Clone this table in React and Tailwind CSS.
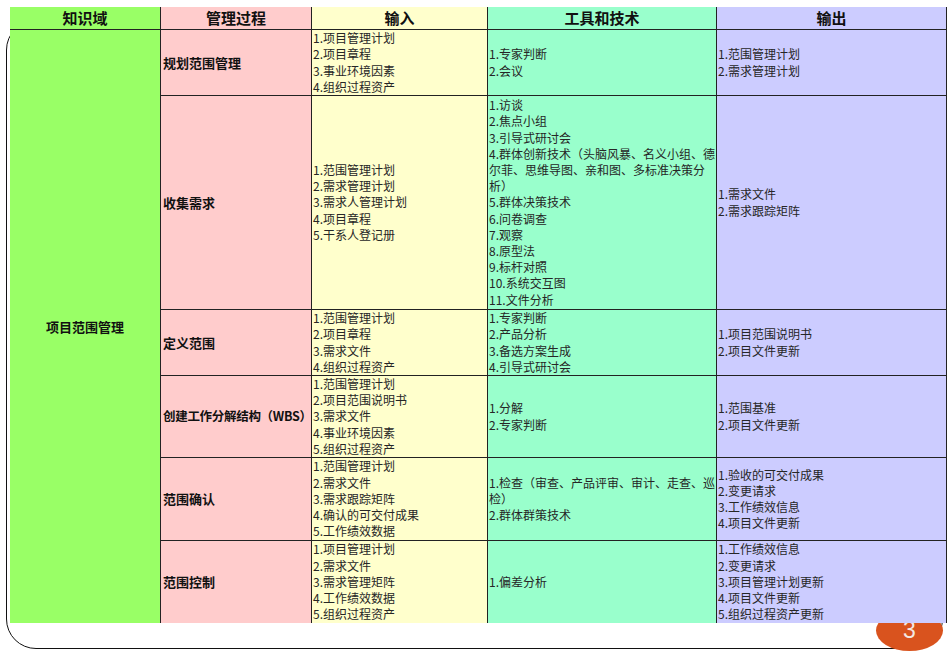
const font = { fontFamily: '"Noto Sans CJK SC", "Noto Sans", sans-serif' };

const rows = [
  {
    name: "规划范围管理",
    h: "h-[65px]",
    input: ["1.项目管理计划", "2.项目章程", "3.事业环境因素", "4.组织过程资产"],
    tools: ["1.专家判断", "2.会议"],
    output: ["1.范围管理计划", "2.需求管理计划"],
  },
  {
    name: "收集需求",
    h: "h-[213px]",
    input: ["1.范围管理计划", "2.需求管理计划", "3.需求人管理计划", "4.项目章程", "5.干系人登记册"],
    tools: [
      "1.访谈",
      "2.焦点小组",
      "3.引导式研讨会",
      "4.群体创新技术（头脑风暴、名义小组、德",
      "尔菲、思维导图、亲和图、多标准决策分",
      "析）",
      "5.群体决策技术",
      "6.问卷调查",
      "7.观察",
      "8.原型法",
      "9.标杆对照",
      "10.系统交互图",
      "11.文件分析",
    ],
    output: ["1.需求文件", "2.需求跟踪矩阵"],
  },
  {
    name: "定义范围",
    h: "h-[65px]",
    input: ["1.范围管理计划", "2.项目章程", "3.需求文件", "4.组织过程资产"],
    tools: ["1.专家判断", "2.产品分析", "3.备选方案生成", "4.引导式研讨会"],
    output: ["1.项目范围说明书", "2.项目文件更新"],
  },
  {
    name: "创建工作分解结构（WBS）",
    small: true,
    h: "h-[81px]",
    input: ["1.范围管理计划", "2.项目范围说明书", "3.需求文件", "4.事业环境因素", "5.组织过程资产"],
    tools: ["1.分解", "2.专家判断"],
    output: ["1.范围基准", "2.项目文件更新"],
  },
  {
    name: "范围确认",
    h: "h-[82px]",
    input: ["1.范围管理计划", "2.需求文件", "3.需求跟踪矩阵", "4.确认的可交付成果", "5.工作绩效数据"],
    tools: ["1.检查（审查、产品评审、审计、走查、巡", "检）", "2.群体群策技术"],
    output: ["1.验收的可交付成果", "2.变更请求", "3.工作绩效信息", "4.项目文件更新"],
  },
  {
    name: "范围控制",
    h: "h-[82px]",
    input: ["1.项目管理计划", "2.需求文件", "3.需求管理矩阵", "4.工作绩效数据", "5.组织过程资产"],
    tools: ["1.偏差分析"],
    output: ["1.工作绩效信息", "2.变更请求", "3.项目管理计划更新", "4.项目文件更新", "5.组织过程资产更新"],
  },
];

const Lines = ({ items, bg, h }) => (
  <div className={`${bg} ${h} overflow-hidden flex flex-col justify-center px-px text-[12px] leading-[16.2px] text-[#262626]`}>
    {items.map((t, i) => (
      <div key={i} className="whitespace-nowrap">{t}</div>
    ))}
  </div>
);

const Row = ({ r }) => (
  <>
    <div
      className={`bg-[#ffcccc] ${r.h} col-start-2 flex items-center pl-[2px] font-bold text-[#111] whitespace-nowrap overflow-hidden ${
        r.small ? "text-[12.5px] tracking-[-0.3px]" : "text-[13px]"
      }`}
    >
      {r.name}
    </div>
    <Lines items={r.input} bg="bg-[#ffffcc]" h={r.h} />
    <Lines items={r.tools} bg="bg-[#99ffcc]" h={r.h} />
    <Lines items={r.output} bg="bg-[#ccccff]" h={r.h} />
  </>
);

export default function App() {
  return (
    <div className="relative w-[950px] h-[658px] bg-white overflow-hidden" style={font}>
      {/* slide frame behind the table */}
      <div className="absolute left-[6px] top-[20px] w-[937px] h-[629px] border-[1.5px] border-[#111] rounded-[30px]" />
      {/* page number badge */}
      <div
        className="absolute left-[876px] top-[610px] w-[67px] h-[41px] rounded-[50%] bg-[#d9531e] flex items-center justify-center text-[#f3e9e4] text-[23px] leading-none"
        style={{ fontFamily: '"Liberation Sans", Arial, sans-serif' }}
      >
        3
      </div>

      <div className="relative pt-[7px] pl-[10px]">
        <div className="grid grid-cols-[150px_150px_175px_228px_229px] gap-px bg-[#222] border-r border-[#222] w-fit">
          <div className="bg-[#99ff66] h-[22px] flex items-center justify-center text-[15px] font-bold text-[#111]">知识域</div>
          <div className="bg-[#ffcccc] h-[22px] flex items-center justify-center text-[15px] font-bold text-[#111]">管理过程</div>
          <div className="bg-[#ffffcc] h-[22px] flex items-center justify-center text-[15px] font-bold text-[#111]">输入</div>
          <div className="bg-[#99ffcc] h-[22px] flex items-center justify-center text-[15px] font-bold text-[#111]">工具和技术</div>
          <div className="bg-[#ccccff] h-[22px] flex items-center justify-center text-[15px] font-bold text-[#111]">输出</div>

          <div className="bg-[#99ff66] col-start-1 row-start-2 row-span-6 flex items-center justify-center text-[13px] font-bold text-[#111]">
            项目范围管理
          </div>

          {rows.map((r, i) => (
            <Row key={i} r={r} />
          ))}
        </div>
      </div>
    </div>
  );
}
